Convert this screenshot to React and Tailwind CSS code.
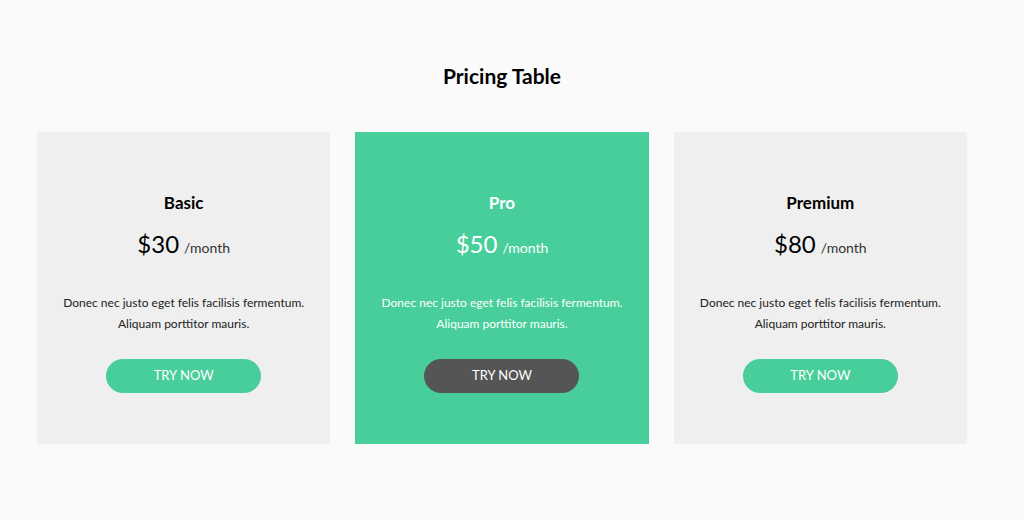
import React from "react";

const plans = [
    { name: "Basic", price: "$30", featured: false },
    { name: "Pro", price: "$50", featured: true },
    { name: "Premium", price: "$80", featured: false },
];

const PlanCard = ({ plan }) => {
    const f = plan.featured;
    return (
        <div
            className={`flex flex-col items-center pt-[60px] h-[312px] ${
                f ? "bg-[#48ce9a] text-white" : "bg-[#efefef] text-black"
            }`}
        >
            <h2 className="text-[17px] font-bold leading-[22px]">{plan.name}</h2>
            <div className="flex items-baseline gap-[5px] mt-[15px]">
                <span className="text-[24px] leading-[30px]">{plan.price}</span>
                <span className={`text-[14px] ${f ? "text-white" : "text-[#333]"}`}>/month</span>
            </div>
            <p className={`mt-[33px] text-[12px] leading-[21px] text-center ${f ? "text-white" : "text-[#222]"}`}>
                Donec nec justo eget felis facilisis fermentum.
                <br />
                Aliquam porttitor mauris.
            </p>
            <button
                className={`mt-[25px] w-[155px] h-[34px] rounded-full text-[13px] uppercase ${
                    f ? "bg-[#555555] text-white" : "bg-[#48ce9a] text-white"
                }`}
            >
                Try now
            </button>
        </div>
    );
};

const App = () => {
    return (
        <div
            className="min-h-[520px] bg-[#fafafa] pt-[64px]"
            style={{ fontFamily: "Lato, 'Noto Sans', sans-serif" }}
        >
            <div className="w-[930px] ml-[37px]">
                <h1 className="text-center text-[21px] font-bold leading-[24px] text-black">Pricing Table</h1>
                <div className="grid grid-cols-3 gap-[25px] mt-[44px]">
                    {plans.map((p) => (
                        <PlanCard key={p.name} plan={p} />
                    ))}
                </div>
            </div>
        </div>
    );
};

export default App;
